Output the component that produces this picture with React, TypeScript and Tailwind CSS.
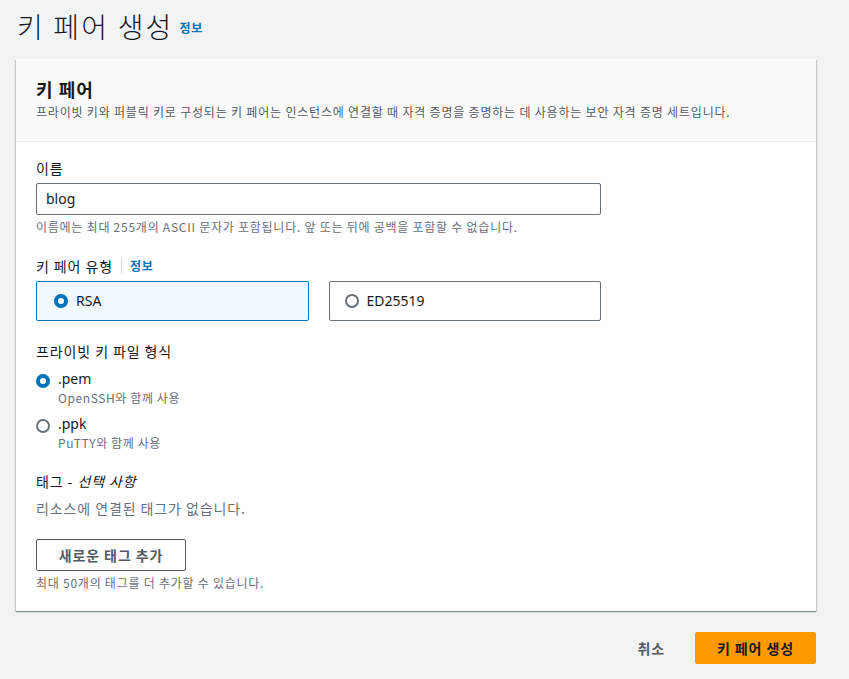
import React from "react";

const font = { fontFamily: '"Noto Sans", "Noto Sans CJK KR", sans-serif', letterSpacing: 0 };

const Radio = ({ checked }: { checked: boolean }) => (
  <span
    className={`inline-block w-[14px] h-[14px] rounded-full shrink-0 bg-white ${
      checked ? "border-[4px] border-[#0073bb]" : "border-[2px] border-[#687078]"
    }`}
  />
);

const App = () => {
  return (
    <div
      className="min-h-screen bg-[#f2f3f3] text-[#16191f] text-[14px] leading-[20px] tracking-[0.9px]"
      style={{ fontFamily: '"Noto Sans CJK KR", "Noto Sans", sans-serif' }}
    >
      <div className="flex items-end gap-[6px] pl-[17px] pt-[2px] h-[44px]">
        <h1 className="text-[28px] leading-[36px] font-light tracking-[2.2px]">키 페어 생성</h1>
        <a className="text-[12px] font-bold text-[#0073bb] mb-[6px] tracking-[0.75px]">정보</a>
      </div>

      <div className="mx-[16px] mt-[15px] w-[800px] bg-white shadow-[0_1px_1px_0_rgba(0,28,36,0.3),1px_1px_1px_0_rgba(0,28,36,0.15),-1px_1px_1px_0_rgba(0,28,36,0.15)]">
        <div className="bg-[#fafafa] border-b border-[#eaeded] px-[20px] pt-[18px] pb-[20px]">
          <h2 className="text-[18px] leading-[24px] font-bold tracking-[1px]">키 페어</h2>
          <p className="text-[12px] leading-[18px] text-[#545b64] mt-[2px] tracking-[0.8px]">
            프라이빗 키와 퍼블릭 키로 구성되는 키 페어는 인스턴스에 연결할 때 자격 증명을 증명하는 데 사용하는 보안 자격 증명 세트입니다.
          </p>
        </div>

        <div className="px-[20px] pt-[16px] pb-[19px]">
          <label className="block">이름</label>
          <div className="mt-[5px] w-[565px] h-[32px] border border-[#687078] rounded-[2px] flex items-center px-[9px]">
            <span style={font}>blog</span>
          </div>
          <p className="text-[12px] leading-[18px] text-[#687078] mt-[3px] tracking-[0.75px]">
            이름에는 최대 255개의 ASCII 문자가 포함됩니다. 앞 또는 뒤에 공백을 포함할 수 없습니다.
          </p>

          <div className="mt-[20px] flex items-center">
            <span>키 페어 유형</span>
            <span className="mx-[8px] w-px h-[16px] bg-[#d5dbdb]" />
            <a className="text-[12px] font-bold text-[#0073bb] tracking-[0.75px]">정보</a>
          </div>
          <div className="mt-[5px] grid grid-cols-2 gap-[20px] w-[565px]">
            <div className="h-[40px] border border-[#0073bb] bg-[#f1faff] rounded-[2px] flex items-center gap-[8px] pl-[17px]">
              <Radio checked />
              <span style={font}>RSA</span>
            </div>
            <div className="h-[40px] border border-[#687078] bg-white rounded-[2px] flex items-center gap-[8px] pl-[15px]">
              <Radio checked={false} />
              <span style={font}>ED25519</span>
            </div>
          </div>

          <div className="mt-[20px]">프라이빗 키 파일 형식</div>
          <div className="mt-[8px] flex gap-[8px]">
            <div className="pt-[3px]"><Radio checked /></div>
            <div>
              <div style={font}>.pem</div>
              <div className="text-[12px] leading-[17px] text-[#687078] tracking-[0.6px]">OpenSSH와 함께 사용</div>
            </div>
          </div>
          <div className="mt-[8px] flex gap-[8px]">
            <div className="pt-[3px]"><Radio checked={false} /></div>
            <div>
              <div style={font}>.ppk</div>
              <div className="text-[12px] leading-[17px] text-[#687078] tracking-[0.6px]">PuTTY와 함께 사용</div>
            </div>
          </div>

          <div className="mt-[20px]">
            태그 - <i>선택 사항</i>
          </div>
          <p className="mt-[7px] text-[#687078]">리소스에 연결된 태그가 없습니다.</p>
          <button className="mt-[21px] h-[32px] w-[150px] border border-[#545b64] rounded-[2px] bg-white font-bold text-[#545b64]">
            새로운 태그 추가
          </button>
          <p className="text-[12px] leading-[18px] text-[#687078] mt-[3px] tracking-[0.75px]">
            최대 50개의 태그를 더 추가할 수 있습니다.
          </p>
        </div>
      </div>

      <div className="w-[816px] flex justify-end items-center mt-[21px] gap-[14px]">
        <button className="h-[32px] px-[16px] font-bold text-[#545b64]">취소</button>
        <button className="h-[32px] w-[121px] bg-[#ff9900] rounded-[2px] font-bold text-[#16191f]">
          키 페어 생성
        </button>
      </div>
    </div>
  );
};

export default App;
